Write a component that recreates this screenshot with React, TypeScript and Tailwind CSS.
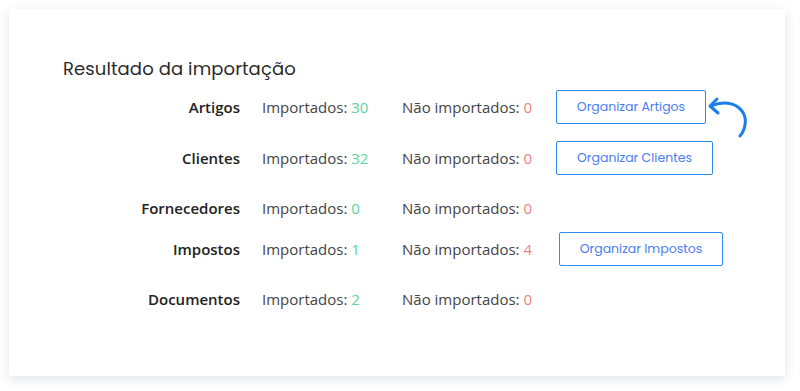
import React from 'react';

type Row = {
  label: string;
  imported: number;
  failed: number;
  action?: string;
  gap: string;
  btn?: string;
};

const rows: Row[] = [
  { label: 'Artigos', imported: 30, failed: 0, action: 'Organizar Artigos', gap: 'mt-[7px]', btn: 'w-[150px]' },
  { label: 'Clientes', imported: 32, failed: 0, action: 'Organizar Clientes', gap: 'mt-[17px]', btn: 'w-[157px]' },
  { label: 'Fornecedores', imported: 0, failed: 0, gap: 'mt-[16px]' },
  { label: 'Impostos', imported: 1, failed: 4, action: 'Organizar Impostos', gap: 'mt-[7px]', btn: 'w-[164px] ml-[3px]' },
  { label: 'Documentos', imported: 2, failed: 0, gap: 'mt-[16px]' },
];

function CurvedArrow() {
  return (
    <svg className="absolute left-[704px] top-[95px]" width="50" height="48" viewBox="704 95 50 48" fill="none">
      <path
        d="M711 106 C 722 101, 735 102, 742 111 C 748 119, 745 130, 740 136"
        stroke="#1a7fe8"
        strokeWidth="3"
        strokeLinecap="round"
        fill="none"
      />
      <path d="M717 99 L 710 106 L 718 113" stroke="#1a7fe8" strokeWidth="3" strokeLinecap="round" strokeLinejoin="round" fill="none" />
    </svg>
  );
}

export default function App() {
  return (
    <div className="w-[800px] h-[391px] bg-white p-[9px] pr-[15px] pb-[15px]">
      <div className="relative w-[776px] h-[367px] bg-white shadow-[0_3px_10px_rgba(70,80,120,0.16)] pl-[54px] pt-[47px]">
        <h2 className="text-[18px] leading-[26px] text-[#2b2b2b] font-['Poppins','Inter','Lato',sans-serif] tracking-[0.1px]">
          Resultado da importação
        </h2>
        <div className="flex flex-col mt-[1px]">
          {rows.map((r) => (
            <div key={r.label} className={`flex items-center h-[34px] ${r.gap} font-['Open_Sans',sans-serif] text-[15px]`}>
              <div className="w-[177px] text-right font-semibold text-[#222]">{r.label}</div>
              <div className="w-[162px] pl-[22px] text-[#444] whitespace-nowrap">
                Importados: <span className="text-[#5fd1a2]">{r.imported}</span>
              </div>
              <div className="w-[154px] text-[#444] whitespace-nowrap">
                Não importados: <span className="text-[#f57f7a]">{r.failed}</span>
              </div>
              {r.action && (
                <button
                  className={`${r.btn} h-[34px] border border-[#2e8bef] rounded-[2px] text-[12.5px] text-[#4a7df0] font-['Poppins','Inter',sans-serif] bg-white`}
                >
                  {r.action}
                </button>
              )}
            </div>
          ))}
        </div>
        <div className="absolute left-[-9px] top-[-9px]">
          <CurvedArrow />
        </div>
      </div>
    </div>
  );
}
